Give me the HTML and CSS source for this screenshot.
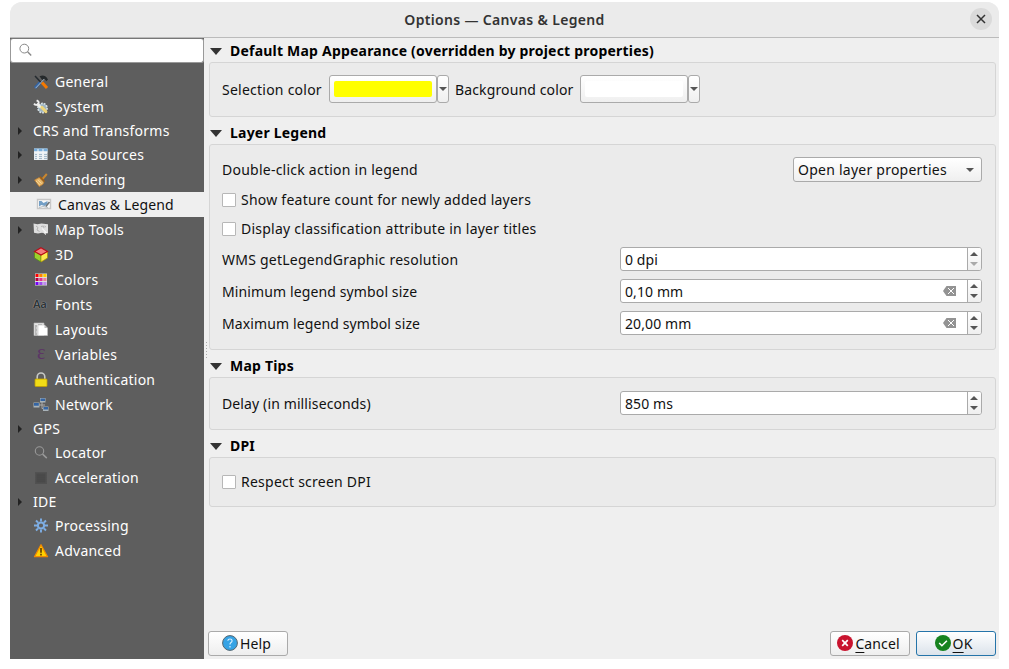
FILE: index.html
```html
<!DOCTYPE html>
<html lang="en">
<head>
<meta charset="utf-8">
<title>Options — Canvas &amp; Legend</title>
<link rel="stylesheet" href="styles.css">
</head>
<body>
<div class="window">
  <header class="titlebar">
    <span class="title">Options — Canvas &amp; Legend</span>
    <button class="close" aria-label="Close"><svg width="22" height="22" viewBox="0 0 22 22"><path d="M7 7l8 8M15 7l-8 8" stroke="#333" stroke-width="1.5"/></svg></button>
  </header>
  <div class="body">
    <aside class="sidebar">
      <div class="search"><svg width="14" height="14" viewBox="0 0 14 14" fill="none" stroke="#888"><circle cx="5.3" cy="5.6" r="4.4"/><path d="M8.6 8.8l3.6 3.6" stroke-width="1.4"/></svg></div>
      <ul class="tree">
        <li><i></i><svg viewBox="0 0 16 16"><path d="M2 2l6 6.5" stroke="#252b30" stroke-width="1.5"/><path d="M9 8.5l5 5.5" stroke="#f57900" stroke-width="3"/><path d="M2 14l5-5.5" stroke="#3465a4" stroke-width="3"/><path d="M2.6 14.2l9-9.6" stroke="#a9bccd" stroke-width="1"/><path d="M6.5 2.2Q11 .4 13.3 3l1.7 2.5-1.6 1.7-2.2-2.4-2 1.3z" fill="#25292b"/></svg><span>General</span></li>
        <li><i></i><svg viewBox="0 0 16 16"><circle cx="9.5" cy="9" r="4.6" fill="#9eb4c2" stroke="#d8e2e7" stroke-width="1.6" stroke-dasharray="1.8 1"/><path d="M4 5l4 3.5" stroke="#f3f3ed" stroke-width="2.6"/><path d="M1 4.6Q3 7 5 5T3.6 1.4" fill="none" stroke="#eee" stroke-width="1.9"/><path d="M9 8.5l3.8 4" stroke="#edd478" stroke-width="3.2" stroke-linecap="round"/></svg><span>System</span></li>
        <li class="plain"><i class="branch"></i><span>CRS and Transforms</span></li>
        <li><i class="branch"></i><svg viewBox="0 0 16 16"><path d="M1 1.5h13.5v11.5H1z" fill="#e6edf3"/><path d="M1 1.5h13.5v3H1z" fill="#78aedc"/><path d="M1 5h13.5M5 2v11M10 2v11" stroke="#f7f7f7"/><path d="M2 7.5h2M6 7.5h3M11 7.5h3M2 9.5h2M6 9.5h3M11 9.5h3M2 11.5h2M6 11.5h3M11 11.5h3" stroke="#a5b9c9"/></svg><span>Data Sources</span></li>
        <li><i class="branch"></i><svg viewBox="0 0 16 16"><path d="M9.5 7l4.3-5" stroke="#c98730" stroke-width="2"/><path d="M6.2 5.6l4.6 4.6-.8 2-3.8 2.4L1.6 8z" fill="#e6b568" stroke="#c08133" stroke-width=".8"/><path d="M3 9l3.6 3.8M5 8l3.6 3.6" stroke="#f5d698"/><path d="M7 4.8l4.6 4.8" stroke="#a65d0a" stroke-width="1.3"/></svg><span>Rendering</span></li>
        <li class="selected"><i></i><svg viewBox="0 0 16 16"><path d="M1.5 2.5h13v9h-13z" fill="#fafafa" stroke="#c7c7c7" stroke-width="1.4"/><path d="M3 4h2.5l2 2 4-2v3l-3 2-3-1-2.5 1.5z" fill="#739fc6"/><path d="M3 10.5l4-1 5 1" stroke="#b5bdc3" fill="none"/><path d="M9.8 9.5l3.7-4.5" stroke="#6f7477" stroke-width="1.6"/></svg><span>Canvas &amp; Legend</span></li>
        <li><i class="branch"></i><svg viewBox="0 0 16 16"><path d="M.5 1.5l4 .7 4-.7 6.5.7v9l-3 .3-3-.7-4 .7-4-.7z" fill="#dedede"/><path d="M3 4l2 1.5-1 2.500 2.5 1.5M8 4.500l2.500-.5.5 2M11.500 4l1.500 1" fill="none" stroke="#b2b2b2"/><path d="M9 6.500l4.500 4-1.800.2.8 2" stroke="#f8f8f8" fill="#eee"/></svg><span>Map Tools</span></li>
        <li><i></i><svg viewBox="0 0 16 16"><path d="M1.500 4.200L8 8v7l-6.500-4z" fill="#9bd12c" stroke="#4f8617" stroke-width=".7"/><path d="M8 8l6.500-3.800V11L8 15z" fill="#fce94f" stroke="#a99300" stroke-width=".7"/><path d="M8 .7l6.500 3.700L8 8 1.500 4.400z" fill="#f47d7d" stroke="#b80d18" stroke-width="1.100"/></svg><span>3D</span></li>
        <li><i></i><svg viewBox="0 0 16 16"><path d="M2 1.500h12v12H2z" fill="#ddd"/><path d="M2.500 2h3v3h-3z" fill="#f00"/><path d="M6.300 2h3.200v3H6.300z" fill="#ff8400"/><path d="M10.300 2h3.200v3h-3.200z" fill="#ffce00"/><path d="M2.500 6h3v3h-3z" fill="#b00040"/><path d="M6.300 6h3.200v3H6.300z" fill="#e82c91"/><path d="M10.300 6h3.200v3h-3.200z" fill="#ee8098"/><path d="M2.500 10h3v3h-3z" fill="#7500f7"/><path d="M6.300 10h3.200v3H6.300z" fill="#9d4bee"/><path d="M10.300 10h3.200v3h-3.200z" fill="#bd8af0"/></svg><span>Colors</span></li>
        <li><i></i><b class="glyph aa">Aa</b><span>Fonts</span></li>
        <li><i></i><svg viewBox="0 0 16 16"><path d="M1 1h10v12.500H1z" fill="#e5e5e5" stroke="#bbb" stroke-width=".6"/><path d="M2 4h2M2 6h1.500M2 8h2M2 10h1.500M2 12h2M6 2v1M8 2v1" stroke="#898989"/><path d="M5 3h6.500l3 3v7.500H5z" fill="#fff" stroke="#c1c1c1" stroke-width=".6"/><path d="M11.500 3v3h3z" fill="#bbb"/></svg><span>Layouts</span></li>
        <li><i></i><b class="glyph eps">ε</b><span>Variables</span></li>
        <li><i></i><svg viewBox="0 0 16 16"><path d="M4.200 7.500V5a3.800 4 0 017.600 0v2.500" fill="none" stroke="#c6c8c5" stroke-width="1.600"/><rect x="2" y="7" width="12" height="7.500" rx=".8" fill="#f1dc16" stroke="#c4a000" stroke-width=".8"/></svg><span>Authentication</span></li>
        <li><i></i><svg viewBox="0 0 16 16"><path d="M4 8h8M9 5v6.500h3" stroke="#aaa" fill="none"/><path d="M.500 5.500h6v5h-6zM7 1h5.500v4.500H7zM10 9.500h5.500V14H10z" fill="#a9b3b9"/><path d="M1 6h4.800v2.700H1zM7.500 1.500h4.500v2.500H7.500zM10.500 10H15v2.500h-4.500z" fill="#3465a4"/></svg><span>Network</span></li>
        <li class="plain"><i class="branch"></i><span>GPS</span></li>
        <li><i></i><svg viewBox="0 0 16 16" fill="none" stroke="#999"><circle cx="6.500" cy="6" r="4.200" stroke-width="1.100"/><path d="M9.600 9.100l4.200 4" stroke-width="1.500"/></svg><span>Locator</span></li>
        <li><i></i><svg viewBox="0 0 16 16"><path d="M3.500 3.500h9v9h-9z" fill="#484848"/><path d="M3 2v12M5 2v12M7 2v12M9 2v12M11 2v12M13 2v12M2 3h12M2 5h12M2 7h12M2 9h12M2 11h12M2 13h12" stroke="#4c4c4c" stroke-width=".8"/></svg><span>Acceleration</span></li>
        <li class="plain"><i class="branch"></i><span>IDE</span></li>
        <li><i></i><svg viewBox="0 0 16 16" fill="none" stroke="#7eaee4"><circle cx="8" cy="7.500" r="3.100" stroke-width="2"/><path d="M8 .5v3M8 11.500v3M1 7.500h3M12 7.500h3M3 2.500l2 2M11 10.500l2 2M13 2.500l-2 2M5 10.500l-2 2" stroke-width="1.900"/></svg><span>Processing</span></li>
        <li><i></i><svg viewBox="0 0 16 16"><path d="M8 1.700l6.500 12H1.500z" fill="#ffd200" stroke="#f28900" stroke-width="1.300" stroke-linejoin="round"/><path d="M8 5v4.700M8 10.800v1.700" stroke="#694200" stroke-width="1.700"/></svg><span>Advanced</span></li>
      </ul>
    </aside>
    <div class="splitter"></div>
    <main class="content">
      <h2 class="h-first">Default Map Appearance (overridden by project properties)</h2>
      <section class="panel appearance">
        <span class="selection-label">Selection color</span>
        <div class="color"><div class="swatch-box"><div class="swatch yellow"></div></div><div class="drop"></div></div>
        <span class="background-label">Background color</span>
        <div class="color"><div class="swatch-box"><div class="swatch"></div></div><div class="drop"></div></div>
      </section>
      <h2>Layer Legend</h2>
      <section class="panel legend">
        <div class="row action"><span>Double-click action in legend</span><div class="combo">Open layer properties</div></div>
        <label class="row check"><i></i><span>Show feature count for newly added layers</span></label>
        <label class="row check"><i></i><span>Display classification attribute in layer titles</span></label>
        <div class="row field"><span>WMS getLegendGraphic resolution</span><div class="spin"><span>0 dpi</span><div class="steps at-min"></div></div></div>
        <div class="row field"><span class="size-label">Minimum legend symbol size</span><div class="spin"><span>0,10 mm</span><svg class="clear" width="13" height="10" viewBox="0 0 13 10"><path d="M3.500 0H13v10H3.500L0 5z" fill="#939393"/><path d="M5 2l6 6M11 2L5 8" stroke="#fff"/></svg><div class="steps"></div></div></div>
        <div class="row field"><span class="size-label">Maximum legend symbol size</span><div class="spin"><span>20,00 mm</span><svg class="clear" width="13" height="10" viewBox="0 0 13 10"><path d="M3.500 0H13v10H3.500L0 5z" fill="#939393"/><path d="M5 2l6 6M11 2L5 8" stroke="#fff"/></svg><div class="steps"></div></div></div>
      </section>
      <h2>Map Tips</h2>
      <section class="panel tips"><div class="row field"><span class="size-label">Delay (in milliseconds)</span><div class="spin"><span>850 ms</span><div class="steps"></div></div></div></section>
      <h2>DPI</h2>
      <section class="panel dpi"><label class="row check"><i></i><span>Respect screen DPI</span></label></section>
      <footer class="actions">
        <button class="btn help"><svg viewBox="0 0 16 16"><circle cx="8" cy="8" r="7.400" fill="#36a3e5" stroke="#56666f"/><path d="M5.800 5.800Q6 4 8 4t2.100 1.700Q10 7 8.700 7.800 8 8.300 8 9.500M8 11v1.400" stroke="#d9f1ff" stroke-width="1.200" fill="none"/></svg><span>Help</span></button>
        <button class="btn cancel"><svg viewBox="0 0 16 16"><circle cx="8" cy="8" r="8" fill="#c9142f"/><path d="M5.200 5.200l5.600 5.600M10.800 5.200l-5.600 5.600" stroke="#fff" stroke-width="1.700"/></svg><span><u>C</u>ancel</span></button>
        <button class="btn ok"><svg viewBox="0 0 16 16"><circle cx="8" cy="8" r="8" fill="#16831f"/><path d="M4.200 8l2.700 2.700 5-5" stroke="#fff" stroke-width="1.600" fill="none"/></svg><span><u>O</u>K</span></button>
      </footer>
    </main>
  </div>
</div>
</body>
</html>
```
FILE: styles.css
```css
* { box-sizing: border-box; }
body { margin: 0; padding: 2px 10px 10px; height: 669px; background: #fff; color: #111; font: 14px/20px "Noto Sans", "Open Sans", sans-serif; letter-spacing: .24px; overflow: hidden; white-space: nowrap; }
.window { height: 657px; background: #efefef; border-radius: 12px 12px 0 0; overflow: hidden; display: flex; flex-direction: column; }
.titlebar { height: 36px; flex: none; background: #ebebeb; border-bottom: 1px solid #bbb; display: grid; grid-template-columns: 30px 1fr 30px; align-items: center; }
.title { grid-column: 2; text-align: center; font-weight: 600; color: #333; letter-spacing: .33px; }
.close { width: 22px; height: 22px; border: 0; border-radius: 50%; padding: 0; background: #dadada; margin: -2px 0 0 1px; }
.close svg { display: block; }
.body { display: flex; flex: 1; min-height: 0; }
.sidebar { width: 194px; background: #5e5e5e; flex: none; }
.search { height: 25px; background: #fff; border: 1px solid #999; border-top-color: #777; border-radius: 3px; padding: 4px 8px; }
.search svg { display: block; }
.tree { list-style: none; margin: 6px 0 0; padding: 0; color: #fff; }
.tree li { display: flex; height: 25px; align-items: center; }
.tree li.plain { height: 23px; }
.tree i { width: 23px; flex: none; }
.tree i.branch::before { content: ""; display: block; width: 0; margin-left: 8px; border: 4px solid transparent; border-left-color: #222; border-right: 0; }
.tree svg, .glyph { width: 16px; height: 16px; flex: none; margin-right: 6px; }
.tree .selected { background: #efefef; color: #111; padding-left: 3px; letter-spacing: .15px; }
.glyph { line-height: 16px; }
.aa { font-size: 11px; color: #2f3738; text-shadow: 0 0 1px #ccc; letter-spacing: -.4px; line-height: 14px; }
.eps { font: 20px/11px "Liberation Serif", serif; color: #5c3566; padding-left: 4px; }
.splitter { width: 5px; padding: 304px 0 0 2px; }
.splitter::before { content: ""; display: block; width: 1px; height: 17px; background: repeating-linear-gradient(#aaa 0 1px, transparent 1px 3px); }
.content { flex: 1; display: flex; flex-direction: column; padding-right: 3px; }
h2 { margin: 0; height: 27px; padding-top: 4px; flex: none; font-size: 14px; line-height: 22px; font-weight: 700; color: #000; display: flex; gap: 8px; align-items: center; letter-spacing: .21px; }
h2::before { content: ""; border: 6px solid transparent; border-top: 7px solid #333; border-bottom: 0; margin: 1px 0 0 1px; }
.h-first { height: 24px; padding-top: 2px; }
.panel { border: 1px solid #d5d5d5; border-radius: 3px; background: #ebebeb; padding: 12px 13px 12px 12px; flex: none; }
.appearance { height: 55px; display: flex; align-items: center; padding-block: 0; }
.selection-label { width: 107px; }
.background-label { width: 125px; margin-left: 6px; letter-spacing: .13px; }
.color { display: flex; width: 120px; height: 28px; margin-top: -1px; }
.swatch-box { width: 108px; border: 1px solid #aaa; border-radius: 3px; padding: 5px 4px; background: linear-gradient(#fff, #efefef); }
.swatch { height: 16px; background: #fff; border-radius: 2px; }
.yellow { background: #ff0; }
.drop { width: 12px; border: 1px solid #aaa; border-radius: 3px; background: linear-gradient(#fff, #efefef); display: flex; align-items: center; justify-content: center; }
.drop::before, .combo::after { content: ""; border: 4px solid transparent; border-top-color: #555; border-bottom: 0; }
.legend { height: 206px; }
.row { display: flex; align-items: center; }
.action { height: 25px; justify-content: space-between; margin-bottom: 6px; }
.combo { width: 189px; height: 25px; border: 1px solid #aaa; border-radius: 3px; padding: 0 7px 0 4px; background: linear-gradient(#fff, #efefef); display: flex; align-items: center; justify-content: space-between; }
.check { height: 23px; margin-bottom: 6px; gap: 5px; }
.check i { width: 14px; height: 14px; background: #fff; border: 1px solid #b7b7b7; border-radius: 1px; }
.field { height: 24px; justify-content: space-between; margin-bottom: 8px; }
.field span { padding-top: 2px; }
.size-label { letter-spacing: .12px; }
.check + .field { margin-top: 7px; }
.spin { width: 362px; height: 24px; border: 1px solid #aaa; border-radius: 3px; background: #fff; display: flex; align-items: center; padding-left: 4px; overflow: hidden; letter-spacing: .1px; }
.clear { margin-left: auto; margin-right: 11px; }
.steps { width: 14px; align-self: stretch; margin-left: auto; border-left: 1px solid #aaa; background: linear-gradient(#fff, #efefef); display: flex; flex-direction: column; align-items: center; justify-content: center; gap: 6px; padding-right: 1px; }
.clear + .steps { margin-left: 0; }
.steps::before, .steps::after { content: ""; border: 4px solid transparent; }
.steps::before { border-top: 0; border-bottom-color: #555; }
.steps::after { border-bottom: 0; border-top-color: #555; }
.at-min::after { border-top-color: #aaa; }
.tips { height: 53px; padding-top: 13px; }
.dpi { height: 50px; }
.actions { margin-top: auto; margin-bottom: 3px; display: flex; margin-left: -1px; }
.btn { width: 80px; height: 25px; font: inherit; letter-spacing: .1px; color: #111; border: 1px solid #aaa; border-radius: 3px; background: linear-gradient(#fff, #eee); display: flex; align-items: center; justify-content: center; gap: 2px; padding: 0 3px 0 0; }
.btn svg { width: 16px; height: 16px; margin-top: -1px; }
.btn u { text-underline-offset: 3px; }
.cancel { margin-left: auto; margin-right: 6px; }
.ok { padding-right: 5px; border-color: #2574a9; background: linear-gradient(#fff, #dbe3eb); }
```
